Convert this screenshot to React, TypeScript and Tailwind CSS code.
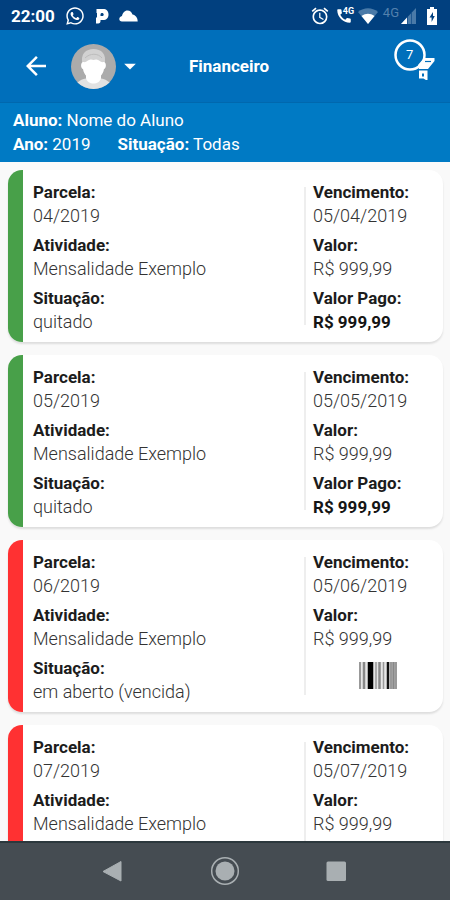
import { FaWhatsapp } from "react-icons/fa";
import { MdAccessAlarm, MdArrowBack, MdArrowDropDown, MdCall } from "react-icons/md";

type Parcela = {
  parcela: string;
  atividade: string;
  situacao: string;
  vencimento: string;
  valor: string;
  valorPago?: string;
};

const parcelas: Parcela[] = [
  { parcela: "04/2019", atividade: "Mensalidade Exemplo", situacao: "quitado", vencimento: "05/04/2019", valor: "R$ 999,99", valorPago: "R$ 999,99" },
  { parcela: "05/2019", atividade: "Mensalidade Exemplo", situacao: "quitado", vencimento: "05/05/2019", valor: "R$ 999,99", valorPago: "R$ 999,99" },
  { parcela: "06/2019", atividade: "Mensalidade Exemplo", situacao: "em aberto (vencida)", vencimento: "05/06/2019", valor: "R$ 999,99" },
  { parcela: "07/2019", atividade: "Mensalidade Exemplo", situacao: "em aberto (vencida)", vencimento: "05/07/2019", valor: "R$ 999,99" },
];

const StatusBar = () => (
  <div className="flex h-[30px] shrink-0 items-center justify-between bg-[#01407f] pr-3 pl-[11px] pt-[2px] text-white">
    <div className="flex items-center gap-[10px]">
      <span className="text-[17px] leading-6 font-bold">22:00</span>
      <FaWhatsapp className="size-5" />
      <svg className="h-4 w-[14px]" viewBox="0 0 14 16">
        <path d="M1.500 1H8C11.500 1 13.500 3 13.500 6.500C13.500 10 11.500 12 8 12H5.500V13C5.500 14.500 4.800 15.500 3.200 15.500H1V9.500H2V5H1.500Z" fill="#fff" />
        <path d="M5.500 8V6.500C5.500 5.500 6.200 5 7 5C8 5 8.700 5.600 8.700 6.500C8.700 7.500 8 8 7 8Z" fill="#01407f" />
      </svg>
      <svg className="h-3 w-[19px]" viewBox="0 0 19 12">
        <path d="M3 11.500C1.200 11.500 0.300 10.500 0.300 9C0.300 7.500 1.200 6.500 3 6C3.500 3 5.500 0.500 8.500 0.500C11 0.500 12.500 2 13.500 4.500C16.500 5 18.700 7.500 18.700 11.500Z" fill="#fff" />
      </svg>
    </div>
    <div className="flex items-center gap-[5px]">
      <MdAccessAlarm className="size-5" />
      <span className="relative">
        <MdCall className="size-[18px]" />
        <span className="absolute -top-px left-2 text-[9px] leading-[10px] font-bold">4G</span>
      </span>
      <svg className="h-4 w-5" viewBox="0 0 20 16">
        <path d="M0 4C6-1 14-1 20 4L10 16Z" fill="#4a7aa8" />
        <path d="M3.500 8C8 5 12 5 16.500 8L10 16Z" fill="#fff" />
      </svg>
      <span className="flex items-center">
        <span className="pb-[6px] text-[13px] leading-4 text-[#5381ad]">4G</span>
        <svg className="h-4 w-[18px]" viewBox="0 0 18 16">
          <path d="M17 0V16H2Z" fill="#4a7aa8" />
          <path d="M8 9.600V16H2Z" fill="#fff" />
          <path d="M8.500 9V16M12.500 5V16" stroke="#01407f" strokeWidth="0.600" />
        </svg>
      </span>
      <svg className="ml-1 h-[18px] w-3" viewBox="0 0 12 18">
        <path d="M4 0H8V2H11V18H1V2H4Z" fill="#fff" />
        <path d="M7 5L3.500 10.500H5.600V15L8.800 9H7Z" fill="#01407f" />
      </svg>
    </div>
  </div>
);

const Header = () => (
  <header className="grid h-[72px] shrink-0 grid-cols-[1fr_auto_1fr] items-center bg-[#006fbb] text-white">
    <div className="flex items-center pl-[21px]">
      <button type="button" aria-label="Voltar">
        <MdArrowBack className="size-[30px]" />
      </button>
      <button type="button" aria-label="Selecionar aluno" className="ml-5 flex items-center">
        <svg className="size-[45px]" viewBox="0 0 45 45">
          <clipPath id="avatar">
            <circle cx="22.500" cy="22.500" r="22.500" />
          </clipPath>
          <g clipPath="url(#avatar)">
            <rect width="45" height="45" fill="#ababab" />
            <path d="M3 45C5 37 11 35 17 34H28C34 35 40 37 42 45Z" fill="#e2e2e2" />
            <path d="M15 28H30V34C29 38 26 39.500 22.500 39.500C19 39.500 16 38 15 34Z" fill="#fff" />
            <path d="M11.500 20C9 10 15 5 22.500 5C30 5 36 10 33.500 20Z" fill="#d2d2d2" />
            <path d="M14 14C19 9 27 9 31 14" fill="none" stroke="#bcbcbc" strokeWidth="1" />
            <path d="M12 18C16 19 17 15 20 15.500C22 16 23 16 25 15.500C28 15 29 19 33 18C36 19 35 25 33 25C32 31 28 35 22.500 35C17 35 13 31 12 25C10 25 9 19 12 18Z" fill="#fff" />
          </g>
        </svg>
        <MdArrowDropDown className="size-7" />
      </button>
    </div>
    <h1 className="pl-2 text-[17px] leading-6 font-bold">Financeiro</h1>
    <button type="button" aria-label="Filtrar" className="relative mr-[14px] mb-[17px] size-11 justify-self-end">
      <svg className="size-11" viewBox="0 0 44 44">
        <circle cx="18" cy="19" r="14.500" fill="none" stroke="#fff" strokeWidth="2.500" />
        <path d="M32 22H42.500V25L36 33H27L26 29Z" fill="#fff" />
        <path d="M33 25.500H39" stroke="#006fbb" strokeWidth="1.200" />
        <path d="M27 34.500H35.500V45L31.500 42.500H27Z" fill="#fff" />
        <rect x="30" y="37.500" width="2" height="3" fill="#006fbb" />
      </svg>
      <span className="absolute top-[11px] left-[14px] text-[13px] leading-4">7</span>
    </button>
  </header>
);

const Campo = ({ label, valor, forte }: { label: string; valor: string; forte?: boolean }) => (
  <div>
    <dt className="text-[17px] font-bold text-[#1c1c1c]">{label}</dt>
    <dd className={forte ? "text-[17px] font-bold text-[#151515]" : "text-[18px] font-light text-[#333333]"}>{valor}</dd>
  </div>
);

const Barcode = () => (
  <svg className="h-[27px] w-[38px]" viewBox="0 0 38 27">
    <rect width="38" height="27" fill="#e6e6e6" />
    <path d="M1 0V27M37 0V27M32 0V27" stroke="#666" strokeWidth="1.200" />
    <path d="M5 0V27M20.500 0V27M34.500 0V27" stroke="#888" strokeWidth="2.500" />
    <path d="M11.500 0V27" stroke="#000" strokeWidth="5.500" />
    <path d="M17 0V27M24.500 0V27" stroke="#999" strokeWidth="1.500" />
    <path d="M29 0V27" stroke="#111" strokeWidth="2.500" />
  </svg>
);

const Card = ({ item }: { item: Parcela }) => (
  <li className="flex shrink-0 overflow-hidden rounded-[14px] bg-white leading-6 shadow-[0_2px_2px_#dedede]">
    <div className={`w-[15px] shrink-0 ${item.valorPago ? "bg-[#48a049]" : "bg-[#ff3132]"}`}></div>
    <dl className="flex flex-1 flex-col gap-[5px] px-[10px] pt-[10px] pb-2 leading-6">
      <Campo label="Parcela:" valor={item.parcela} />
      <Campo label="Atividade:" valor={item.atividade} />
      <Campo label="Situação:" valor={item.situacao} />
    </dl>
    <div className="my-[17px] w-[2px] bg-[#eeeeee]"></div>
    <div className="flex w-[137px] shrink-0 flex-col pt-[10px] pb-2 pl-[7px] leading-6">
      <dl className="flex flex-col gap-[5px]">
        <Campo label="Vencimento:" valor={item.vencimento} />
        <Campo label="Valor:" valor={item.valor} />
        {item.valorPago && <Campo label="Valor Pago:" valor={item.valorPago} forte />}
      </dl>
      {!item.valorPago && (
        <button type="button" aria-label="Código de barras" className="flex flex-1 items-start justify-center pt-[11px]">
          <Barcode />
        </button>
      )}
    </div>
  </li>
);

const NavBar = () => (
  <nav className="flex h-[59px] shrink-0 items-center justify-center gap-[82px] border-t-2 border-[#2c383d] bg-[#454c52] pb-[2px]">
    <button type="button" aria-label="Anterior">
      <svg className="size-[30px]" viewBox="0 0 30 30">
        <path d="M23 5.500V25L5 15.500Z" fill="#a9afb2" stroke="#a9afb2" strokeLinejoin="round" />
      </svg>
    </button>
    <button type="button" aria-label="Início">
      <svg className="size-[30px]" viewBox="0 0 30 30">
        <circle cx="15" cy="15" r="13.300" fill="none" stroke="#a9afb2" strokeWidth="1.500" />
        <circle cx="15" cy="15" r="9.500" fill="#a9afb2" />
      </svg>
    </button>
    <button type="button" aria-label="Recentes">
      <svg className="size-[30px]" viewBox="0 0 30 30">
        <rect x="4.500" y="5.500" width="19.500" height="19.500" rx="1.500" fill="#a9afb2" />
      </svg>
    </button>
  </nav>
);

export default function App() {
  return (
    <div className="flex h-screen flex-col overflow-hidden bg-[#f9f9f9] font-[Roboto,sans-serif]">
      <StatusBar />
      <Header />
      <section className="shrink-0 border-t border-[#0068ae] bg-[#007ac4] px-[13px] pt-[5px] pb-[6px] text-[17px] leading-6 text-white">
        <p>
          <b className="font-bold">Aluno:</b> Nome do Aluno
        </p>
        <p className="flex gap-[27px]">
          <span>
            <b className="font-bold">Ano:</b> 2019
          </span>
          <span>
            <b className="font-bold">Situação:</b> Todas
          </span>
        </p>
      </section>
      <main className="min-h-0 flex-1 overflow-y-auto [scrollbar-width:none]">
        <ul className="flex flex-col gap-[13px] py-2 pr-[7px] pl-2">
          {parcelas.map((item) => (
            <Card key={item.parcela} item={item} />
          ))}
        </ul>
      </main>
      <NavBar />
    </div>
  );
}
